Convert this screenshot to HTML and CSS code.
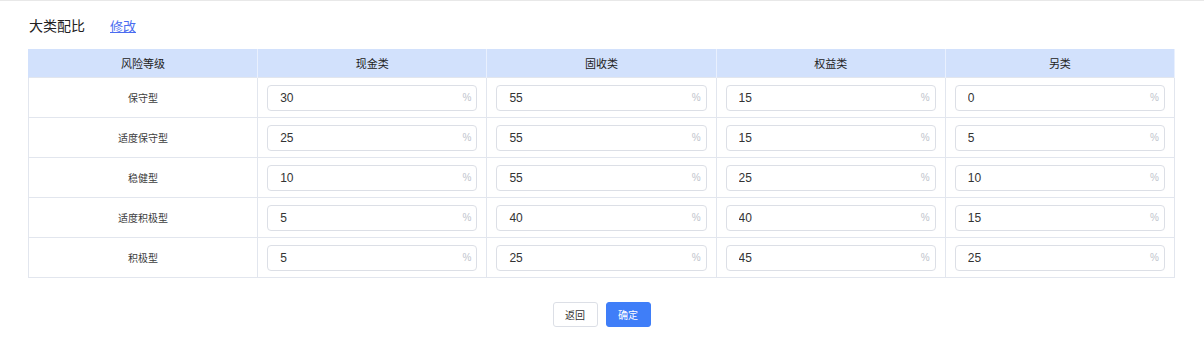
FILE: index.html
```html
<!DOCTYPE html>
<html lang="zh-CN">
	<head>
		<meta charset="UTF-8" />
		<title>大类配比</title>
		<link rel="stylesheet" href="styles.css">
	</head>
	<body>
		<div class="page">
			<div class="title-bar">
				<span class="title">大类配比</span>
				<a class="edit-link" href="#">修改</a>
			</div>

			<table class="ratio-table">
				<thead>
					<tr>
						<th>风险等级</th>
						<th>现金类</th>
						<th>固收类</th>
						<th>权益类</th>
						<th>另类</th>
					</tr>
				</thead>
				<tbody>
					<tr>
						<td class="level">保守型</td>
						<td><div class="field"><input value="30"><span class="suffix">%</span></div></td>
						<td><div class="field"><input value="55"><span class="suffix">%</span></div></td>
						<td><div class="field"><input value="15"><span class="suffix">%</span></div></td>
						<td><div class="field"><input value="0"><span class="suffix">%</span></div></td>
					</tr>
					<tr>
						<td class="level">适度保守型</td>
						<td><div class="field"><input value="25"><span class="suffix">%</span></div></td>
						<td><div class="field"><input value="55"><span class="suffix">%</span></div></td>
						<td><div class="field"><input value="15"><span class="suffix">%</span></div></td>
						<td><div class="field"><input value="5"><span class="suffix">%</span></div></td>
					</tr>
					<tr>
						<td class="level">稳健型</td>
						<td><div class="field"><input value="10"><span class="suffix">%</span></div></td>
						<td><div class="field"><input value="55"><span class="suffix">%</span></div></td>
						<td><div class="field"><input value="25"><span class="suffix">%</span></div></td>
						<td><div class="field"><input value="10"><span class="suffix">%</span></div></td>
					</tr>
					<tr>
						<td class="level">适度积极型</td>
						<td><div class="field"><input value="5"><span class="suffix">%</span></div></td>
						<td><div class="field"><input value="40"><span class="suffix">%</span></div></td>
						<td><div class="field"><input value="40"><span class="suffix">%</span></div></td>
						<td><div class="field"><input value="15"><span class="suffix">%</span></div></td>
					</tr>
					<tr>
						<td class="level">积极型</td>
						<td><div class="field"><input value="5"><span class="suffix">%</span></div></td>
						<td><div class="field"><input value="25"><span class="suffix">%</span></div></td>
						<td><div class="field"><input value="45"><span class="suffix">%</span></div></td>
						<td><div class="field"><input value="25"><span class="suffix">%</span></div></td>
					</tr>
				</tbody>
			</table>

			<div class="actions">
				<button class="btn">返回</button>
				<button class="btn btn-primary">确定</button>
			</div>
		</div>
	</body>
</html>
```

FILE: styles.css
```css
:root {
	--text-color: #333;
	--label-color: #3d3d3d;
	--border-color: #e2e6ee;
	--input-border: #dcdfe6;
	--header-bg: #d2e1fc;
	--suffix-color: #c0c4cc;
	--primary: #3f7ef8;
	--link-color: #4a6cf0;
}

body {
	margin: 0;
	font-family: "Liberation Sans", "Noto Sans CJK SC", sans-serif;
	color: var(--text-color);
	background: #fff;
}

.page {
	border-top: 1px solid #e8e8e8;
	padding: 0 29px 0 28px;
}

.title-bar {
	height: 48px;
	display: flex;
	align-items: center;
	padding-left: 1px;
}

.title {
	font-size: 14px;
	font-weight: 400;
	color: #222;
}

.edit-link {
	margin-left: 25px;
	font-size: 13px;
	color: var(--link-color);
	text-decoration: underline;
}

.ratio-table {
	width: 100%;
	border-collapse: collapse;
	table-layout: fixed;
}

.ratio-table th {
	height: 28px;
	padding: 0;
	background-color: var(--header-bg);
	font-size: 11px;
	font-weight: 400;
	color: #222;
	border-left: 1px solid var(--header-bg);
	border-right: 1px solid rgba(255, 255, 255, 0.5);
}

.ratio-table td {
	height: 39px;
	padding: 0 9px;
	border: 1px solid var(--border-color);
}

.ratio-table td.level {
	text-align: center;
	font-size: 10px;
	color: var(--label-color);
}

.field {
	display: flex;
	align-items: center;
	height: 24px;
	border: 1px solid var(--input-border);
	border-radius: 4px;
	padding: 0 5px 0 12px;
}

.field input {
	flex: 1;
	min-width: 0;
	border: none;
	outline: none;
	padding: 0;
	font-family: inherit;
	font-size: 12px;
	color: #333;
	background: transparent;
}

.suffix {
	font-size: 10px;
	color: var(--suffix-color);
}

.actions {
	display: flex;
	justify-content: center;
	gap: 8px;
	margin-top: 24px;
}

.btn {
	width: 45px;
	height: 25px;
	padding: 0;
	border: 1px solid var(--input-border);
	border-radius: 3px;
	background: #fff;
	font-family: inherit;
	font-size: 10px;
	color: #333;
}

.btn-primary {
	background-color: var(--primary);
	border-color: var(--primary);
	color: #fff;
}
```
